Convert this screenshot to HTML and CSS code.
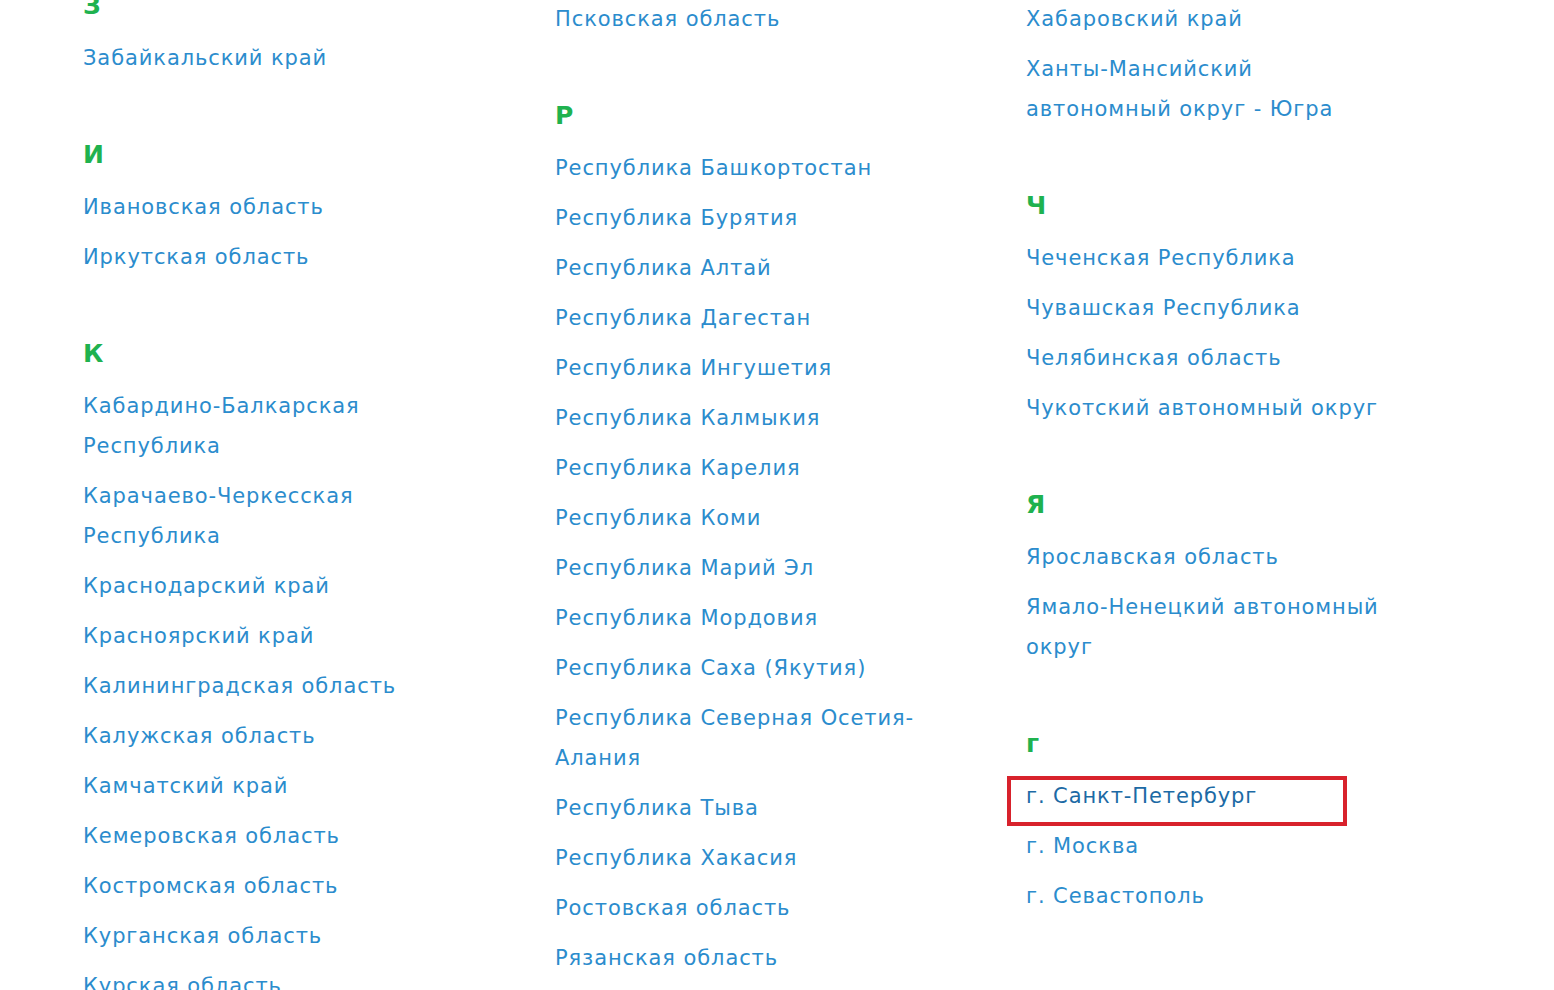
FILE: index.html
```html
<!DOCTYPE html>
<html lang="ru">
<head>
    <meta charset="UTF-8">
    <meta name="viewport" content="width=device-width, initial-scale=1.0">
    <title>Регионы</title>
    <link rel="stylesheet" href="styles.css">
</head>
<body>
    <div class="regions">
        <div class="column column-first">
            <div class="group">
                <div class="letter">З</div>
                <a class="region" href="#">Забайкальский край</a>
            </div>
            <div class="group">
                <div class="letter">И</div>
                <a class="region" href="#">Ивановская область</a>
                <a class="region" href="#">Иркутская область</a>
            </div>
            <div class="group">
                <div class="letter">К</div>
                <a class="region" href="#">Кабардино-Балкарская Республика</a>
                <a class="region" href="#">Карачаево-Черкесская Республика</a>
                <a class="region" href="#">Краснодарский край</a>
                <a class="region" href="#">Красноярский край</a>
                <a class="region" href="#">Калининградская область</a>
                <a class="region" href="#">Калужская область</a>
                <a class="region" href="#">Камчатский край</a>
                <a class="region" href="#">Кемеровская область</a>
                <a class="region" href="#">Костромская область</a>
                <a class="region" href="#">Курганская область</a>
                <a class="region" href="#">Курская область</a>
            </div>
        </div>

        <div class="column">
            <div class="group">
                <a class="region" href="#">Псковская область</a>
            </div>
            <div class="group">
                <div class="letter">Р</div>
                <a class="region" href="#">Республика Башкортостан</a>
                <a class="region" href="#">Республика Бурятия</a>
                <a class="region" href="#">Республика Алтай</a>
                <a class="region" href="#">Республика Дагестан</a>
                <a class="region" href="#">Республика Ингушетия</a>
                <a class="region" href="#">Республика Калмыкия</a>
                <a class="region" href="#">Республика Карелия</a>
                <a class="region" href="#">Республика Коми</a>
                <a class="region" href="#">Республика Марий Эл</a>
                <a class="region" href="#">Республика Мордовия</a>
                <a class="region" href="#">Республика Саха (Якутия)</a>
                <a class="region" href="#">Республика Северная Осетия-Алания</a>
                <a class="region" href="#">Республика Тыва</a>
                <a class="region" href="#">Республика Хакасия</a>
                <a class="region" href="#">Ростовская область</a>
                <a class="region" href="#">Рязанская область</a>
            </div>
        </div>

        <div class="column">
            <div class="group">
                <a class="region" href="#">Хабаровский край</a>
                <a class="region" href="#">Ханты-Мансийский автономный округ - Югра</a>
            </div>
            <div class="group">
                <div class="letter">Ч</div>
                <a class="region" href="#">Чеченская Республика</a>
                <a class="region" href="#">Чувашская Республика</a>
                <a class="region" href="#">Челябинская область</a>
                <a class="region" href="#">Чукотский автономный округ</a>
            </div>
            <div class="group">
                <div class="letter">Я</div>
                <a class="region" href="#">Ярославская область</a>
                <a class="region" href="#">Ямало-Ненецкий автономный округ</a>
            </div>
            <div class="group">
                <div class="letter">г</div>
                <a class="region region-active" href="#">г. Санкт-Петербург<span class="highlight"></span></a>
                <a class="region" href="#">г. Москва</a>
                <a class="region" href="#">г. Севастополь</a>
            </div>
        </div>
    </div>
</body>
</html>
```

FILE: styles.css
```css
body {
    margin: 0;
    background: #ffffff;
    font-family: "DejaVu Sans", "Open Sans", sans-serif;
    overflow: hidden;
}

.regions {
    display: grid;
    grid-template-columns: 472px 471px 472px;
    padding-left: 83px;
    margin-top: -6px;
}

.column-first {
    margin-top: -4px;
}

.group {
    display: flex;
    flex-direction: column;
    align-items: flex-start;
    margin-bottom: 56px;
}

.letter {
    color: #1fb24f;
    font-size: 25px;
    font-weight: 700;
    line-height: 31px;
    margin-bottom: 12px;
}

.region {
    position: relative;
    display: block;
    max-width: 372px;
    padding: 5px 0;
    color: #2b8ccd;
    font-size: 21px;
    line-height: 40px;
    letter-spacing: 0.9px;
    text-decoration: none;
}

.region-active {
    color: #1c6aa5;
}

.highlight {
    position: absolute;
    left: -19px;
    top: 5px;
    width: 332px;
    height: 42px;
    border: 4px solid #d8222c;
}
```
